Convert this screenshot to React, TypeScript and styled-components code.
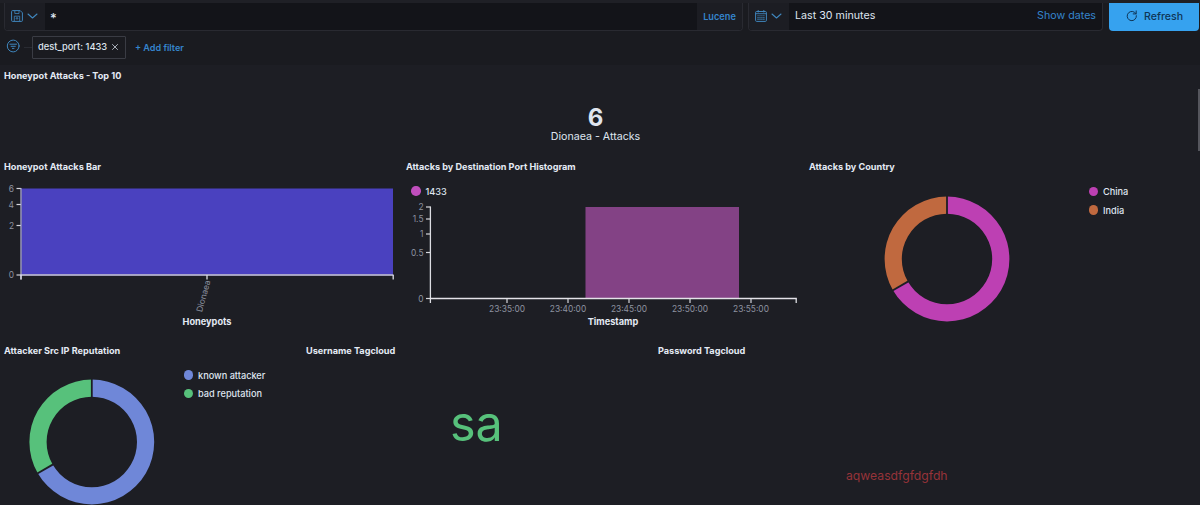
import React from "react";
import styled, { createGlobalStyle } from "styled-components";

const GlobalStyle = createGlobalStyle`
  * { box-sizing: border-box; }
  body {
    margin: 0;
    background: #1d1e24;
    color: #dfe5ef;
    font-family: Inter, "Liberation Sans", sans-serif;
    overflow: hidden;
  }
  svg { display: block; }
`;

const Page = styled.div`
  width: 1200px;
  height: 505px;
  display: flex;
  flex-direction: column;
  overflow: hidden;
  position: relative;
`;

const Header = styled.header`
  height: 65px;
  flex: none;
  background: #1a1b20;
  border-top: 3px solid #1f2026;
`;

const QueryRow = styled.div`
  display: flex;
  height: 28px;
  padding-left: 4px;
`;

const Control = styled.div<{ $width: number; $gap: number }>`
  display: flex;
  width: ${(p) => p.$width}px;
  height: 28px;
  margin-right: ${(p) => p.$gap}px;
  background: #131419;
  border: 1px solid #292a31;
  border-top: 0;
  border-radius: 0 0 4px 4px;
  overflow: hidden;
  align-items: center;
`;

const Prepend = styled.button<{ $width: number }>`
  display: flex;
  align-items: center;
  gap: 4px;
  width: ${(p) => p.$width}px;
  height: 100%;
  padding: 0 0 1px 6px;
  border: 0;
  background: #1c1d23;
  color: #3f86bd;
`;

const QueryText = styled.div`
  flex: 1;
  padding: 3px 0 0 5px;
  font-size: 13px;
  font-weight: 500;
  line-height: 16px;
`;

const Language = styled.button`
  width: 45px;
  height: 100%;
  padding: 0 0 1px;
  border: 0;
  background: #1c1d23;
  color: #3585cd;
  font: 600 9.2px Inter, sans-serif;
`;

const RangeText = styled.span`
  flex: 1;
  padding: 0 0 2px 6px;
  font-size: 10.7px;
`;

const ShowDates = styled.span`
  padding: 0 6px 2px 0;
  color: #3585cd;
  font-size: 10.7px;
`;

const RefreshButton = styled.button`
  display: flex;
  align-items: center;
  width: 90px;
  height: 28px;
  padding: 0 0 2px 17px;
  gap: 6px;
  border: 0;
  border-radius: 0 0 4px 4px;
  background: #36a2ef;
  color: #0f3556;
  font: 500 10.6px Inter, sans-serif;
`;

const FilterRow = styled.div`
  display: flex;
  align-items: center;
  height: 32px;
  padding-left: 6px;
`;

const FilterLine = styled.i`
  width: 8px;
  height: 1px;
  margin-left: 4px;
  background: #292b32;
`;

const FilterPill = styled.div`
  display: flex;
  align-items: center;
  width: 94px;
  height: 23px;
  padding: 0 0 1px 5px;
  gap: 4px;
  border: 1px solid #3a3c44;
  border-radius: 1px;
  font-size: 9.3px;
  font-weight: 500;
  white-space: nowrap;
`;

const AddFilter = styled.button`
  margin-left: 9px;
  padding: 0;
  border: 0;
  background: none;
  color: #3585cd;
  font: 600 9.05px Inter, sans-serif;
`;

const Grid = styled.main`
  display: flex;
  flex-direction: column;
`;

const Row = styled.div<{ $height: number }>`
  display: flex;
  height: ${(p) => p.$height}px;
`;

const Panel = styled.section<{ $width: number }>`
  width: ${(p) => p.$width}px;
  flex: none;
  padding-left: 4px;
  overflow: hidden;
`;

const PanelTitle = styled.h2<{ $line?: number }>`
  margin: 0;
  height: 20px;
  font-size: 9.15px;
  line-height: ${(p) => p.$line ?? 21}px;
  font-weight: 700;
  color: #e4eaf4;
  white-space: nowrap;
`;

const Metric = styled.div`
  display: flex;
  flex-direction: column;
  align-items: center;
  padding: 20px 13px 0 0;
`;

const MetricValue = styled.strong`
  font-size: 24px;
  line-height: 25px;
  font-weight: 700;
`;

const MetricLabel = styled.span`
  font-size: 10.65px;
  line-height: 13px;
`;

const Split = styled.div`
  display: flex;
`;

const Legend = styled.ul<{ $left: number; $top: number }>`
  list-style: none;
  margin: 0;
  padding: ${(p) => p.$top}px 0 0 ${(p) => p.$left}px;
`;

const LegendItem = styled.li<{ $color: string }>`
  display: flex;
  align-items: center;
  gap: 5px;
  height: 18.4px;
  font-size: 9.2px;
  font-weight: 500;
  white-space: nowrap;
  &::before {
    content: "";
    width: 9.5px;
    height: 9.5px;
    border-radius: 50%;
    background: ${(p) => p.$color};
  }
`;

const TickText = styled.text`
  fill: #8d93a0;
  font-size: 8.4px;
`;

const AxisTitle = styled.text`
  fill: #e4eaf4;
  font-size: 9.2px;
  font-weight: 700;
  text-anchor: middle;
`;

const Tag = styled.div<{ $size: number; $color: string; $left: number; $top: number }>`
  padding: ${(p) => p.$top}px 0 0 ${(p) => p.$left}px;
  font-size: ${(p) => p.$size}px;
  line-height: 1;
  color: ${(p) => p.$color};
`;

const ScrollThumb = styled.div`
  position: absolute;
  right: 0;
  top: 89px;
  width: 2px;
  height: 62px;
  background: #55565d;
`;

const Chevron = () => (
  <svg width="11" height="12" viewBox="0 0 11 12" fill="none" stroke="currentColor" strokeWidth="1.1">
    <path d="M1 4 5.5 8 10 4" strokeLinecap="round" strokeLinejoin="round" />
  </svg>
);

const SaveIcon = () => (
  <svg width="12" height="12" viewBox="0 0 12 12" fill="none" stroke="currentColor">
    <path d="M1.5.6h7.7l2.2 2.2v7.7a.9.9 0 0 1-.9.9h-9a.9.9 0 0 1-.9-.9v-9a.9.9 0 0 1 .9-.9Z" />
    <path d="M3.8.8v2.7h4.2v-2.7M3.3 11V6.2h5.4V11" strokeWidth=".8" />
    <circle cx="6" cy="8.4" r=".8" strokeWidth=".9" />
  </svg>
);

const CalendarIcon = () => (
  <svg width="12" height="12" viewBox="0 0 12 12" fill="none" stroke="currentColor">
    <rect x=".6" y="1.5" width="10.8" height="9.9" rx="1" />
    <path d="M.6 3.7h10.8M3.2 0v2.5M8.8 0v2.5" strokeWidth=".9" />
    <path d="M2.5 5.8h7M2.5 7.6h7M2.5 9.4h7" strokeWidth="1.1" strokeDasharray="1.1 .85" />
  </svg>
);

const FilterGlyph = styled.svg`
  margin-bottom: 2px;
`;

const FilterIcon = () => (
  <FilterGlyph width="14" height="14" viewBox="0 0 14 14" fill="none" stroke="#3f86bd" strokeLinecap="round">
    <circle cx="7.2" cy="7" r="5.9" />
    <path d="M3.9 5.2h6.6M5.1 7.3h4.2M6.4 9.4h1.6" />
  </FilterGlyph>
);

const RefreshIcon = () => (
  <svg width="12" height="12" viewBox="0 0 12 12" fill="none" stroke="currentColor" strokeLinecap="round">
    <path d="M10.4 5.7A4.6 4.6 0 1 1 8.6 2.4L10 3.7" />
    <path d="M10.2.9v3H7.2" />
  </svg>
);

const CloseIcon = () => (
  <svg width="8" height="8" viewBox="0 0 8 8" stroke="#b9bfca" strokeWidth=".9">
    <path d="M1.2 1.2 6.8 6.8M6.8 1.2 1.2 6.8" />
  </svg>
);

type DonutProps = { cx: number; cy: number; width: number; height: number; major: string; minor: string };

function Donut({ cx, cy, width, height, major, minor }: DonutProps) {
  const outer = 62.4;
  const inner = 45.2;
  const at = (r: number, deg: number) => {
    const a = (deg * Math.PI) / 180;
    return `${cx + r * Math.sin(a)} ${cy - r * Math.cos(a)}`;
  };
  const slice = (from: number, to: number) => {
    const large = to - from > 180 ? 1 : 0;
    return `M${at(outer, from)}A${outer} ${outer} 0 ${large} 1 ${at(outer, to)}L${at(inner, to)}A${inner} ${inner} 0 ${large} 0 ${at(inner, from)}Z`;
  };
  return (
    <svg width={width} height={height} viewBox={`0 0 ${width} ${height}`}>
      <path d={slice(0, 240)} fill={major} />
      <path d={slice(240, 360)} fill={minor} />
      {[0, 240].map((deg) => (
        <path key={deg} d={`M${at(inner - 1, deg)}L${at(outer + 1, deg)}`} stroke="#1d1e24" strokeWidth="1.8" />
      ))}
    </svg>
  );
}

function HoneypotBar() {
  const ticks: [string, number][] = [["6", 11.5], ["4", 27.5], ["2", 48.5], ["0", 98]];
  return (
    <svg width="398" height="160" viewBox="0 0 398 160">
      <rect x="17.5" y="11.5" width="371.5" height="86" fill="#4a41bf" />
      {ticks.map(([label, y]) => (
        <g key={label}>
          <TickText x="10" y={y + 3} textAnchor="end">{label}</TickText>
          <path d={`M12.5 ${y}H17`} stroke="#d5d6dc" strokeWidth="1.2" />
        </g>
      ))}
      <path d="M17 11V102.5" stroke="#b9b6df" strokeWidth="1.2" />
      <path d="M16.5 98H389.5" stroke="#cfcdea" strokeWidth="1.5" />
      <path d="M17 98V102.5M203 98V102.5M389.2 98V102.5" stroke="#dcdde2" strokeWidth="1.3" />
      <TickText transform="translate(198 135.5) rotate(-75)" x="0" y="0">Dionaea</TickText>
      <AxisTitle x="203" y="148">Honeypots</AxisTitle>
    </svg>
  );
}

function PortHistogram() {
  const yTicks: [string, number][] = [["2", 7], ["1.5", 19], ["1", 34], ["0.5", 52.5], ["0", 98.5]];
  const xTicks: [string, number][] = [
    ["23:35:00", 101], ["23:40:00", 162], ["23:45:00", 223], ["23:50:00", 284], ["23:55:00", 345],
  ];
  return (
    <svg width="399" height="140" viewBox="0 0 399 140">
      <rect x="179.5" y="7" width="153.5" height="91" fill="#834285" />
      {yTicks.map(([label, y]) => (
        <g key={label}>
          <TickText x="17.5" y={y + 3} textAnchor="end">{label}</TickText>
          <path d={`M20 ${y}H24.5`} stroke="#d5d6dc" strokeWidth="1.2" />
        </g>
      ))}
      {xTicks.map(([label, x]) => (
        <g key={label}>
          <TickText x={x} y="111.6" textAnchor="middle">{label}</TickText>
          <path d={`M${x} 98.5V103`} stroke="#d5d6dc" strokeWidth="1.2" />
        </g>
      ))}
      <path d="M24.4 6.5V103M390.2 98.5V103" stroke="#dcdde2" strokeWidth="1.3" />
      <path d="M24 98.5H390.8" stroke="#e4e2e8" strokeWidth="1.4" />
      <AxisTitle x="207" y="125">Timestamp</AxisTitle>
    </svg>
  );
}

export default function App() {
  return (
    <Page>
      <GlobalStyle />
      <Header>
        <QueryRow>
          <Control $width={739} $gap={5}>
            <Prepend $width={40}><SaveIcon /><Chevron /></Prepend>
            <QueryText>*</QueryText>
            <Language>Lucene</Language>
          </Control>
          <Control $width={355} $gap={6}>
            <Prepend $width={40}><CalendarIcon /><Chevron /></Prepend>
            <RangeText>Last 30 minutes</RangeText>
            <ShowDates>Show dates</ShowDates>
          </Control>
          <RefreshButton><RefreshIcon />Refresh</RefreshButton>
        </QueryRow>
        <FilterRow>
          <FilterIcon />
          <FilterLine />
          <FilterPill>dest_port: 1433<CloseIcon /></FilterPill>
          <AddFilter>+ Add filter</AddFilter>
        </FilterRow>
      </Header>
      <Grid>
        <Row $height={92}>
          <Panel $width={1200}>
            <PanelTitle>Honeypot Attacks - Top 10</PanelTitle>
            <Metric>
              <MetricValue>6</MetricValue>
              <MetricLabel>Dionaea - Attacks</MetricLabel>
            </Metric>
          </Panel>
        </Row>
        <Row $height={183}>
          <Panel $width={402}>
            <PanelTitle $line={19}>Honeypot Attacks Bar</PanelTitle>
            <HoneypotBar />
          </Panel>
          <Panel $width={403}>
            <PanelTitle $line={19}>Attacks by Destination Port Histogram</PanelTitle>
            <Legend $left={5} $top={5}>
              <LegendItem $color="#c04ebd">1433</LegendItem>
            </Legend>
            <PortHistogram />
          </Panel>
          <Panel $width={395}>
            <PanelTitle $line={19}>Attacks by Country</PanelTitle>
            <Split>
              <Donut cx={138} cy={82} width={240} height={160} major="#bd40b3" minor="#c0693f" />
              <Legend $left={39.5} $top={5.5}>
                <LegendItem $color="#bd40b3">China</LegendItem>
                <LegendItem $color="#c0693f">India</LegendItem>
              </Legend>
            </Split>
          </Panel>
        </Row>
        <Row $height={165}>
          <Panel $width={302}>
            <PanelTitle>Attacker Src IP Reputation</PanelTitle>
            <Split>
              <Donut cx={87.8} cy={82} width={160} height={145} major="#6f87d8" minor="#57c17b" />
              <Legend $left={19.5} $top={6}>
                <LegendItem $color="#6f87d8">known attacker</LegendItem>
                <LegendItem $color="#57c17b">bad reputation</LegendItem>
              </Legend>
            </Split>
          </Panel>
          <Panel $width={352}>
            <PanelTitle>Username Tagcloud</PanelTitle>
            <Tag $size={48.5} $color="#57c17b" $left={144} $top={40}>sa</Tag>
          </Panel>
          <Panel $width={546}>
            <PanelTitle>Password Tagcloud</PanelTitle>
            <Tag $size={12.2} $color="#963339" $left={188} $top={110}>aqweasdfgfdgfdh</Tag>
          </Panel>
        </Row>
      </Grid>
      <ScrollThumb />
    </Page>
  );
}
